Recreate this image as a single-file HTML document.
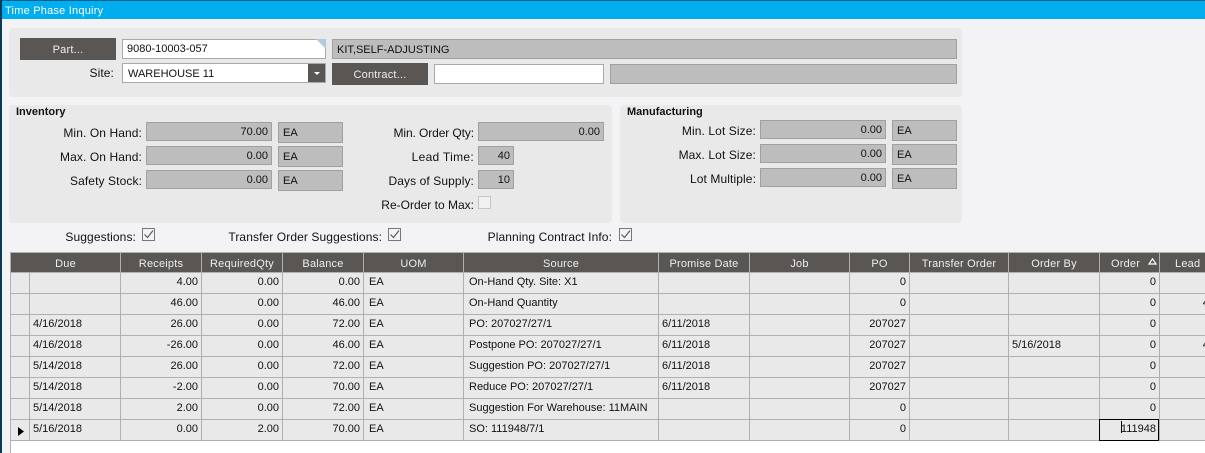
<!DOCTYPE html>
<html><head><meta charset="utf-8"><style>
html,body{margin:0;padding:0}
body{width:1205px;height:453px;position:relative;overflow:hidden;background:#f3f3f5;font:11px/1 "Liberation Sans",Arial,sans-serif;color:#111}
div{box-sizing:border-box;position:absolute}
.panel{background:#e9e9e9;border-radius:4px}
.btn{background:#595653;color:#eee;font-size:11px;text-align:center;line-height:24px;letter-spacing:.2px}
.in{background:#fff;border:1px solid #a9a9a9;line-height:18px;padding-left:4px;font-size:11px}
.g{background:#bdbdbd;border:1px solid #a0a0a0;line-height:18px;padding:0 3px;font-size:11px}
.r{text-align:right}
.ea{padding:2px 0 0 4px}
.l{font-size:12px;text-align:right;white-space:nowrap;letter-spacing:.1px}
.b{font-weight:bold;font-size:11px}
.cb{width:13px;height:13px;border:1px solid #777;background:#f3f3f5}
.cb svg{position:absolute;left:0;top:0}
table{position:absolute;left:10px;top:252px;border-collapse:collapse;table-layout:fixed;width:1210px;font-size:11px}
td,th{border:1px solid #b0b0b0;height:21px;padding:0 3px 2px 3px;white-space:nowrap;overflow:hidden;font-weight:normal;box-sizing:border-box;background:#e9e9e9}
tr{height:21px}
tr.h{height:20px}
th{background:#595653;color:#eee;letter-spacing:.2px;height:20px;text-align:center;padding:4px 3px 0}
td.n{text-align:right;padding-right:3px}
td.t{padding-left:5px}
</style></head><body>
<div style="left:0;top:0;width:1205px;height:19px;background:#00adef;border-top:1px solid #0a5f86"></div>
<div style="left:0;top:0;width:2px;height:453px;background:#0a3a57"></div>
<div style="left:5px;top:6px;color:#fff;font-size:11px;letter-spacing:.22px;white-space:nowrap">Time Phase Inquiry</div>

<div class="panel" style="left:9px;top:28px;width:953px;height:69px"></div>
<div class="btn" style="left:20px;top:38px;width:96px;height:22px">Part...</div>
<div class="in" style="left:122px;top:39px;width:204px;height:20px">9080-10003-057</div>
<svg style="position:absolute;left:316px;top:39px" width="10" height="10"><path d="M0 0H10V10Z" fill="#b4c7e0"/></svg>
<div class="g" style="left:332px;top:39px;width:625px;height:20px;line-height:20px;padding-left:4px">KIT,SELF-ADJUSTING</div>
<div class="l" style="left:60px;top:67px;width:54px">Site:</div>
<div class="in" style="left:122px;top:63px;width:204px;height:20px;padding-left:5px;line-height:20px">WAREHOUSE 11</div>
<div style="left:308px;top:64px;width:17px;height:18px;background:#595653"></div>
<svg style="position:absolute;left:314px;top:72px" width="6" height="3"><path d="M0 0H6L3 3Z" fill="#fff"/></svg>
<div class="btn" style="left:332px;top:63px;width:96px;height:22px">Contract...</div>
<div class="in" style="left:434px;top:64px;width:170px;height:20px"></div>
<div class="g" style="left:610px;top:64px;width:347px;height:20px"></div>

<div class="panel" style="left:9px;top:105px;width:603px;height:118px"></div>
<div class="panel" style="left:620px;top:105px;width:342px;height:118px"></div>
<div class="b" style="left:16px;top:107px">Inventory</div>
<div class="b" style="left:627px;top:107px">Manufacturing</div>

<div class="l" style="left:20px;top:127px;width:122px">Min. On Hand:</div>
<div class="g r" style="left:146px;top:122px;width:126px;height:19px">70.00</div>
<div class="g ea" style="left:278px;top:122px;width:65px;height:21px;padding-top:1px">EA</div>
<div class="l" style="left:20px;top:151px;width:122px">Max. On Hand:</div>
<div class="g r" style="left:146px;top:146px;width:126px;height:19px">0.00</div>
<div class="g ea" style="left:278px;top:146px;width:65px;height:21px;padding-top:1px">EA</div>
<div class="l" style="left:20px;top:175px;width:122px">Safety Stock:</div>
<div class="g r" style="left:146px;top:170px;width:126px;height:19px">0.00</div>
<div class="g ea" style="left:278px;top:170px;width:65px;height:21px;padding-top:1px">EA</div>

<div class="l" style="left:352px;top:127px;width:122px;letter-spacing:-.1px">Min. Order Qty:</div>
<div class="g r" style="left:478px;top:122px;width:126px;height:19px">0.00</div>
<div class="l" style="left:352px;top:151px;width:122px;letter-spacing:.3px">Lead Time:</div>
<div class="g r" style="left:478px;top:146px;width:36px;height:19px">40</div>
<div class="l" style="left:352px;top:175px;width:122px">Days of Supply:</div>
<div class="g r" style="left:478px;top:170px;width:36px;height:19px">10</div>
<div class="l" style="left:352px;top:199px;width:122px;letter-spacing:0">Re-Order to Max:</div>
<div style="left:478px;top:196px;width:13px;height:13px;border:1px solid #c4c4c4;background:#f0f0f0"></div>

<div class="l" style="left:634px;top:125px;width:122px">Min. Lot Size:</div>
<div class="g r" style="left:760px;top:120px;width:126px;height:19px">0.00</div>
<div class="g ea" style="left:892px;top:120px;width:65px;height:21px;padding-top:1px">EA</div>
<div class="l" style="left:634px;top:149px;width:122px">Max. Lot Size:</div>
<div class="g r" style="left:760px;top:144px;width:126px;height:19px">0.00</div>
<div class="g ea" style="left:892px;top:144px;width:65px;height:21px;padding-top:1px">EA</div>
<div class="l" style="left:634px;top:173px;width:122px">Lot Multiple:</div>
<div class="g r" style="left:760px;top:168px;width:126px;height:19px">0.00</div>
<div class="g ea" style="left:892px;top:168px;width:65px;height:21px;padding-top:1px">EA</div>

<div class="l" style="left:20px;top:231px;width:116px">Suggestions:</div>
<div class="cb" style="left:142px;top:228px"><svg width="11" height="11"><path d="M1.5 5.5L4.5 8.5L10 1.5" fill="none" stroke="#555" stroke-width="1.1"/></svg></div>
<div class="l" style="left:200px;top:231px;width:182px">Transfer Order Suggestions:</div>
<div class="cb" style="left:388px;top:228px"><svg width="11" height="11"><path d="M1.5 5.5L4.5 8.5L10 1.5" fill="none" stroke="#555" stroke-width="1.1"/></svg></div>
<div class="l" style="left:439px;top:231px;width:173px">Planning Contract Info:</div>
<div class="cb" style="left:619px;top:228px"><svg width="11" height="11"><path d="M1.5 5.5L4.5 8.5L10 1.5" fill="none" stroke="#555" stroke-width="1.1"/></svg></div>

<div style="left:10px;top:440px;width:1195px;height:13px;background:#fff;border-left:1px solid #b0b0b0"></div>
<div style="left:0;top:0;width:1205px;height:453px;overflow:hidden;background:none">
<table>
<colgroup><col style="width:19px"><col style="width:91px"><col style="width:81px"><col style="width:81px"><col style="width:81px"><col style="width:100px"><col style="width:195px"><col style="width:91px"><col style="width:100px"><col style="width:60px"><col style="width:99px"><col style="width:91px"><col style="width:60px"><col style="width:61px"></colgroup>
<tr class="h"><th colspan="2">Due</th><th>Receipts</th><th>RequiredQty</th><th>Balance</th><th>UOM</th><th>Source</th><th>Promise Date</th><th>Job</th><th>PO</th><th>Transfer Order</th><th>Order By</th><th style="text-align:left;padding-left:11px">Order</th><th style="text-align:left;padding-left:15px">Lead</th></tr>
<tr><td></td><td></td><td class="n">4.00</td><td class="n">0.00</td><td class="n">0.00</td><td class="t">EA</td><td class="t">On-Hand Qty. Site: X1</td><td></td><td></td><td class="n">0</td><td></td><td></td><td class="n">0</td><td></td></tr>
<tr><td></td><td></td><td class="n">46.00</td><td class="n">0.00</td><td class="n">46.00</td><td class="t">EA</td><td class="t">On-Hand Quantity</td><td></td><td></td><td class="n">0</td><td></td><td></td><td class="n">0</td><td class="n" style="padding-right:5px">40</td></tr>
<tr><td></td><td>4/16/2018</td><td class="n">26.00</td><td class="n">0.00</td><td class="n">72.00</td><td class="t">EA</td><td class="t">PO: 207027/27/1</td><td>6/11/2018</td><td></td><td class="n">207027</td><td></td><td></td><td class="n">0</td><td></td></tr>
<tr><td></td><td>4/16/2018</td><td class="n">-26.00</td><td class="n">0.00</td><td class="n">46.00</td><td class="t">EA</td><td class="t">Postpone PO: 207027/27/1</td><td>6/11/2018</td><td></td><td class="n">207027</td><td></td><td>5/16/2018</td><td class="n">0</td><td class="n" style="padding-right:5px">40</td></tr>
<tr><td></td><td>5/14/2018</td><td class="n">26.00</td><td class="n">0.00</td><td class="n">72.00</td><td class="t">EA</td><td class="t">Suggestion PO: 207027/27/1</td><td>6/11/2018</td><td></td><td class="n">207027</td><td></td><td></td><td class="n">0</td><td></td></tr>
<tr><td></td><td>5/14/2018</td><td class="n">-2.00</td><td class="n">0.00</td><td class="n">70.00</td><td class="t">EA</td><td class="t">Reduce PO: 207027/27/1</td><td>6/11/2018</td><td></td><td class="n">207027</td><td></td><td></td><td class="n">0</td><td></td></tr>
<tr><td></td><td>5/14/2018</td><td class="n">2.00</td><td class="n">0.00</td><td class="n">72.00</td><td class="t">EA</td><td class="t">Suggestion For Warehouse: 11MAIN</td><td></td><td></td><td class="n">0</td><td></td><td></td><td class="n">0</td><td></td></tr>
<tr><td></td><td>5/16/2018</td><td class="n">0.00</td><td class="n">2.00</td><td class="n">70.00</td><td class="t">EA</td><td class="t">SO: 111948/7/1</td><td></td><td></td><td class="n">0</td><td></td><td></td><td class="n">111948</td><td></td></tr>
</table>
</div>
<svg style="position:absolute;left:1148px;top:258px" width="9" height="7"><path d="M4.5 .8L8 6H1Z" fill="none" stroke="#fff" stroke-width="1.2"/></svg>
<svg style="position:absolute;left:18px;top:427px" width="6" height="9"><path d="M0 0L6 4.5L0 9Z" fill="#000"/></svg>
<div style="left:1099px;top:419px;width:60px;height:22px;border:1px solid #000"></div>
<div style="left:1121px;top:421px;width:1px;height:12px;background:#000"></div>
</body></html>
